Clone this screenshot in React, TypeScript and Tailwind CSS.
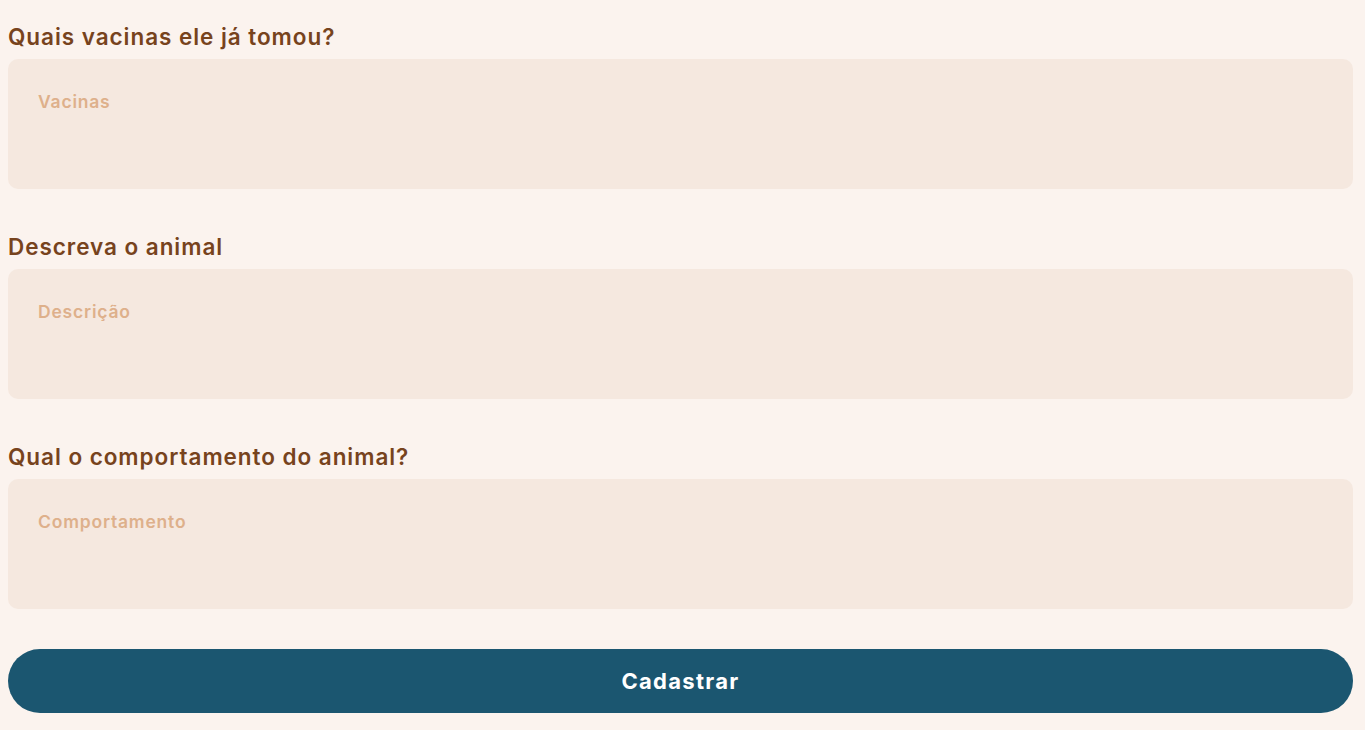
import React from "react";

const font = { fontFamily: 'Inter, "Noto Sans", sans-serif' };

function Field({ label, placeholder }: { label: string; placeholder: string }) {
  return (
    <div className="flex flex-col">
      <label className="text-[22.5px] leading-[27px] font-semibold tracking-[0.95px] text-[#77431d] mb-[9px]">{label}</label>
      <textarea
        placeholder={placeholder}
        className="h-[130px] w-full resize-none rounded-[10px] bg-[#f5e8df] px-[30px] pt-[31px] text-[17.5px] leading-[24px] font-semibold tracking-[0.8px] text-[#77431d] outline-none placeholder:text-[#deb08b]"
        style={font}
      />
    </div>
  );
}

export default function App() {
  return (
    <div className="min-h-[730px] w-full bg-[#fbf3ee] pl-2 pr-3 pt-[23px]" style={font}>
      <div className="flex flex-col gap-[44px]">
        <Field label="Quais vacinas ele já tomou?" placeholder="Vacinas" />
        <Field label="Descreva o animal" placeholder="Descrição" />
        <Field label="Qual o comportamento do animal?" placeholder="Comportamento" />
      </div>
      <button className="mt-[40px] h-[64px] w-full rounded-full bg-[#1b5670] text-[22px] font-bold tracking-[1.3px] text-white">
        Cadastrar
      </button>
    </div>
  );
}
